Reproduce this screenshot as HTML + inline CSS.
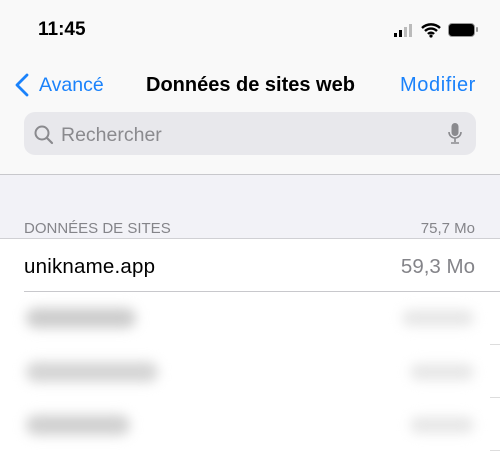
<!DOCTYPE html>
<html><head><style>
body{margin:0;width:500px;height:456px;overflow:hidden;font-family:"Liberation Sans",sans-serif;background:#fff;position:relative}
.a{position:absolute}
</style></head><body>
<div class="a" style="left:0;top:0;width:500px;height:174px;background:#f9f9f9;border-bottom:1px solid #c8c8cc"></div>
<div class="a" style="left:0;top:175px;width:500px;height:63px;background:#f2f2f7;border-bottom:1px solid #d0d0d4"></div>
<div class="a" style="left:38px;top:19px;font-size:19px;font-weight:bold;color:#000">11:45</div>
<div class="a" style="left:394px;top:33px;width:3px;height:4px;background:#000"></div>
<div class="a" style="left:399px;top:30px;width:3px;height:7px;background:#000"></div>
<div class="a" style="left:404px;top:27px;width:3px;height:10px;background:#bbb"></div>
<div class="a" style="left:409px;top:24px;width:3px;height:13px;background:#bbb"></div>
<svg class="a" style="left:421px;top:22px" width="20" height="16" viewBox="0 0 20 16"><path d="M1 6a13 13 0 0 1 18 0M4 9a8.5 8.5 0 0 1 12 0M7 12a4 4 0 0 1 6 0" stroke="#000" stroke-width="2.4" fill="none"/><circle cx="10" cy="14" r="1.6"/></svg>
<div class="a" style="left:448px;top:23px;width:25px;height:12px;border-radius:4px;background:#000;border:1px solid #999"></div>
<div class="a" style="left:476px;top:27px;width:2px;height:5px;background:#999;border-radius:1px"></div>
<svg class="a" style="left:14px;top:73px" width="16" height="24" viewBox="0 0 16 24"><path d="M13 2L3 12l10 10" stroke="#1a82fb" stroke-width="2.8" fill="none" stroke-linecap="round" stroke-linejoin="round"/></svg>
<div class="a" style="left:39px;top:74px;font-size:19.5px;color:#1a82fb">Avancé</div>
<div class="a" style="left:146px;top:74px;font-size:20px;font-weight:bold;color:#000">Données de sites web</div>
<div class="a" style="left:400px;top:74px;font-size:20px;letter-spacing:0.6px;color:#1a82fb">Modifier</div>
<div class="a" style="left:24px;top:112px;width:452px;height:43px;border-radius:11px;background:#e8e8ec"></div>
<svg class="a" style="left:33px;top:124px" width="22" height="22" viewBox="0 0 22 22"><circle cx="9" cy="9" r="6.5" stroke="#8a8a8e" stroke-width="2" fill="none"/><path d="M14 14l5 5" stroke="#8a8a8e" stroke-width="2.2" stroke-linecap="round"/></svg>
<div class="a" style="left:61px;top:124px;font-size:19.5px;color:#8a8a8e">Rechercher</div>
<svg class="a" style="left:447px;top:122px" width="16" height="24" viewBox="0 0 16 24"><rect x="4.5" y="1" width="7" height="13" rx="3.5" fill="#8a8a8e"/><path d="M2 10a6 6 0 0 0 12 0M8 16v4M4 21h8" stroke="#8a8a8e" stroke-width="1.6" fill="none"/></svg>
<div class="a" style="left:24px;top:220px;font-size:15px;color:#848489">DONNÉES DE SITES</div>
<div class="a" style="right:25px;top:220px;font-size:15px;color:#848489">75,7 Mo</div>
<div class="a" style="left:24px;top:255px;font-size:20.5px;letter-spacing:0.2px;color:#000">unikname.app</div>
<div class="a" style="right:25px;top:255px;font-size:20.5px;color:#848489">59,3 Mo</div>
<div class="a" style="left:24px;top:291px;width:476px;height:1px;background:#c8c8cc"></div>
<div class="a" style="left:26px;top:308px;width:110px;height:20px;background:#ccc;border-radius:10px;filter:blur(6px)"></div>
<div class="a" style="left:402px;top:310px;width:72px;height:16px;background:#e6e6e6;border-radius:8px;filter:blur(6px)"></div>
<div class="a" style="left:26px;top:362px;width:132px;height:20px;background:#d4d4d4;border-radius:10px;filter:blur(6px)"></div>
<div class="a" style="left:410px;top:364px;width:64px;height:16px;background:#e6e6e6;border-radius:8px;filter:blur(6px)"></div>
<div class="a" style="left:26px;top:415px;width:104px;height:20px;background:#d0d0d0;border-radius:10px;filter:blur(6px)"></div>
<div class="a" style="left:410px;top:417px;width:64px;height:16px;background:#e6e6e6;border-radius:8px;filter:blur(6px)"></div>
<div class="a" style="left:490px;top:344px;width:10px;height:1px;background:#ddd"></div>
<div class="a" style="left:490px;top:397px;width:10px;height:1px;background:#ddd"></div>
<div class="a" style="left:490px;top:450px;width:10px;height:1px;background:#ddd"></div>
</body></html>
